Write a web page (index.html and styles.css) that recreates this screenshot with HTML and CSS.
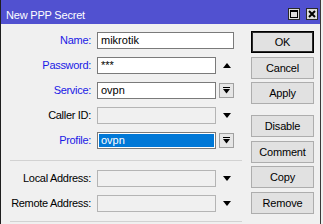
FILE: index.html
```html
<!DOCTYPE html>
<html>
<head>
<meta charset="utf-8">
<link rel="stylesheet" href="styles.css">
</head>
<body>
<div class="window">
  <div class="titlebar">
    <span class="title">New PPP Secret</span>
    <div class="tb-buttons">
      <span class="tb-btn"><svg width="10" height="10" viewBox="0 0 10 10"><rect x="1.5" y="1.5" width="7" height="7" fill="none" stroke="#000" stroke-width="1"/><rect x="1" y="1" width="8" height="2" fill="#000"/></svg></span>
      <span class="tb-btn"><svg width="10" height="10" viewBox="0 0 10 10"><path d="M2 2 L8 8 M8 2 L2 8" stroke="#000" stroke-width="2"/></svg></span>
    </div>
  </div>
  <div class="content">
    <div class="form">
      <div class="rows">
        <div class="lbl blue">Name:</div>
        <div class="field"><div class="input full">mikrotik</div></div>

        <div class="lbl blue">Password:</div>
        <div class="field"><div class="input part">***</div><span class="slot"><span class="tri up"></span></span></div>

        <div class="lbl blue">Service:</div>
        <div class="field"><div class="input part">ovpn</div><span class="ddbtn"><svg width="7" height="7" viewBox="0 0 7 7"><rect x="0" y="0" width="7" height="1" fill="#000"/><path d="M0 2 H7 L3.5 6.5 Z" fill="#000"/></svg></span></div>

        <div class="lbl">Caller ID:</div>
        <div class="field"><div class="input part off"></div><span class="slot"><span class="tri down"></span></span></div>

        <div class="lbl blue">Profile:</div>
        <div class="field"><div class="input part sel">ovpn</div><span class="ddbtn"><svg width="7" height="7" viewBox="0 0 7 7"><rect x="0" y="0" width="7" height="1" fill="#000"/><path d="M0 2 H7 L3.5 6.5 Z" fill="#000"/></svg></span></div>
      </div>
      <div class="sep first"></div>
      <div class="rows">
        <div class="lbl">Local Address:</div>
        <div class="field"><div class="input part off"></div><span class="slot"><span class="tri down"></span></span></div>

        <div class="lbl">Remote Address:</div>
        <div class="field"><div class="input part off"></div><span class="slot"><span class="tri down"></span></span></div>
      </div>
      <div class="sep last"></div>
    </div>
    <div class="buttons">
      <div class="btn default">OK</div>
      <div class="btn">Cancel</div>
      <div class="btn">Apply</div>
      <div class="btn spaced">Disable</div>
      <div class="btn">Comment</div>
      <div class="btn">Copy</div>
      <div class="btn">Remove</div>
    </div>
  </div>
</div>
</body>
</html>
```
FILE: styles.css
```css
html, body {
  margin: 0;
  padding: 0;
  background: #f0f0f0;
}
body {
  font-family: "Liberation Sans", Arial, sans-serif;
  font-size: 11px;
  color: #000;
}
.window {
  width: 321px;
  height: 224px;
  box-sizing: border-box;
  border-left: 1px solid #1e1e1e;
  border-right: 1px solid #3a3a3a;
  background: #f0f0f0;
  overflow: hidden;
}
.titlebar {
  height: 24px;
  box-sizing: border-box;
  background: #5151d0;
  display: flex;
  justify-content: space-between;
  align-items: flex-start;
  padding: 9px 2px 0 5px;
}
.title {
  color: #fff;
  line-height: 13px;
  letter-spacing: -0.2px;
}
.tb-buttons {
  display: flex;
  gap: 6px;
  margin-top: -1px;
}
.tb-btn {
  width: 12px;
  height: 12px;
  box-sizing: border-box;
  border: 1px solid #2a2a2a;
  background: #dcdcdc;
  display: flex;
  align-items: center;
  justify-content: center;
}
.tb-btn svg { display: block; }
.content {
  display: flex;
  gap: 6px;
}
.form {
  width: 244px;
  padding-top: 8px;
}
.rows {
  display: grid;
  grid-template-columns: 90px 137px;
  grid-auto-rows: 17px;
  column-gap: 6px;
  row-gap: 8px;
}
.lbl {
  text-align: right;
  line-height: 17px;
  letter-spacing: -0.3px;
  white-space: nowrap;
}
.lbl.blue { color: #1a1ae6; }
.field {
  display: flex;
  gap: 3px;
  align-items: center;
}
.input {
  height: 17px;
  box-sizing: border-box;
  border: 1px solid #7a7a7a;
  background: #fff;
  padding: 0 3px;
  line-height: 15px;
  white-space: nowrap;
  overflow: hidden;
}
.input.full { width: 137px; }
.input.part { width: 119px; }
.input.off {
  background: #f0f0f0;
  border-color: #b4b4b4;
}
.input.sel {
  background: #0078d7;
  color: #fff;
  box-shadow: inset 0 0 0 1px #fff;
}
.slot {
  width: 15px;
  height: 15px;
  display: flex;
  align-items: center;
  justify-content: center;
}
.tri {
  width: 0;
  height: 0;
  border-left: 4px solid transparent;
  border-right: 4px solid transparent;
}
.tri.up { border-bottom: 5px solid #000; }
.tri.down { border-top: 5px solid #000; }
.ddbtn {
  width: 15px;
  height: 15px;
  box-sizing: border-box;
  border: 1px solid #a0a0a0;
  background: #e6e6e6;
  display: flex;
  align-items: center;
  justify-content: center;
}
.ddbtn svg { display: block; }
.sep {
  margin-left: 9px;
  width: 232px;
  height: 0;
  border-top: 1px solid #d2d2d2;
}
.sep.first { margin-top: 11px; margin-bottom: 9px; }
.sep.last { margin-top: 9px; }
.buttons {
  width: 63px;
  padding-top: 7px;
  display: flex;
  flex-direction: column;
  gap: 3.5px;
}
.btn {
  height: 22px;
  box-sizing: border-box;
  border: 1px solid #adadad;
  background: #e1e1e1;
  text-align: center;
  line-height: 20px;
  letter-spacing: -0.2px;
}
.btn.default {
  border-color: #000;
  box-shadow: inset 0 0 0 1px #2a2a2a;
}
.btn.spaced { margin-top: 7.5px; }
```
